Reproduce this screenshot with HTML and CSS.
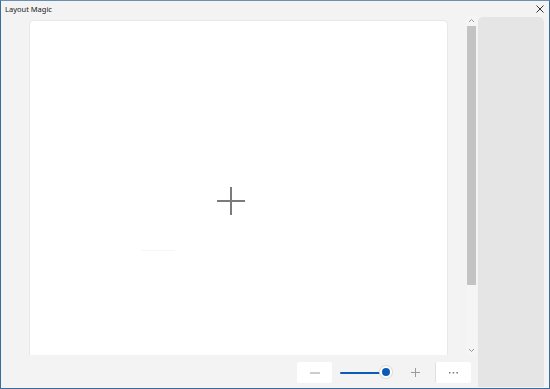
FILE: index.html
```html
<!DOCTYPE html>
<html>
  <head>
    <title>Layout Magic</title>
    <link rel="stylesheet" href="styles.css">
  </head>
  <body>
    <div class="window">
      <div class="titlebar">
        <span class="title">Layout Magic</span>
        <svg class="close" width="8" height="8" viewBox="0 0 8 8">
          <path d="M0.5 0.5 L7.5 7.5 M7.5 0.5 L0.5 7.5" stroke="#333" stroke-width="1" fill="none"/>
        </svg>
      </div>
      <div class="main">
        <div class="workspace">
          <div class="canvas-row">
            <div class="canvas">
              <svg class="add" width="30" height="30" viewBox="0 0 30 30">
                <path d="M15 1 V29 M1 15 H29" stroke="#7b7b7b" stroke-width="2" fill="none"/>
              </svg>
              <div class="ghost-line"></div>
            </div>
            <div class="scrollbar">
              <svg class="arrow" width="7" height="5" viewBox="0 0 7 5">
                <path d="M1 4 L3.5 1.5 L6 4" stroke="#9a9a9a" stroke-width="1" fill="none"/>
              </svg>
              <div class="thumb"></div>
              <svg class="arrow" width="7" height="5" viewBox="0 0 7 5">
                <path d="M1 1 L3.5 3.5 L6 1" stroke="#9a9a9a" stroke-width="1" fill="none"/>
              </svg>
            </div>
          </div>
          <div class="toolbar">
            <div class="btn">
              <svg width="10" height="2" viewBox="0 0 10 2"><path d="M0 1 H10" stroke="#9a9a9a" stroke-width="1"/></svg>
            </div>
            <div class="slider">
              <div class="track"></div>
              <div class="knob"></div>
            </div>
            <div class="btn flat">
              <svg width="9" height="9" viewBox="0 0 9 9"><path d="M4.5 0 V9 M0 4.5 H9" stroke="#9a9a9a" stroke-width="1"/></svg>
            </div>
            <div class="sep"></div>
            <div class="btn">
              <svg width="9" height="2" viewBox="0 0 9 2">
                <rect x="0" y="0" width="1.5" height="1.5" fill="#777"/>
                <rect x="3.7" y="0" width="1.5" height="1.5" fill="#777"/>
                <rect x="7.4" y="0" width="1.5" height="1.5" fill="#777"/>
              </svg>
            </div>
          </div>
        </div>
        <div class="panel"></div>
      </div>
    </div>
  </body>
</html>
```

FILE: styles.css
```css
html, body {
  margin: 0;
  height: 100%;
}

body {
  font-family: "Noto Sans", "Liberation Sans", sans-serif;
  background-color: #f3f3f3;
}

.window {
  box-sizing: border-box;
  width: 550px;
  height: 389px;
  border: 1px solid #3b6d9c;
  border-top-color: #6a8fb3;
  background-color: #f3f3f3;
  display: flex;
  flex-direction: column;
}

.titlebar {
  height: 15px;
  display: flex;
  align-items: center;
  justify-content: space-between;
  padding: 0 5px 0 4px;
}

.title {
  font-size: 7.5px;
  color: #1a1a1a;
  margin-top: 1px;
}

.close {
  margin-top: 1px;
}

.main {
  flex: 1;
  display: flex;
}

.workspace {
  flex: 1;
  display: flex;
  flex-direction: column;
  padding-top: 4px;
}

.canvas-row {
  display: flex;
  height: 335px;
}

.canvas {
  box-sizing: border-box;
  width: 419px;
  margin-left: 28px;
  background-color: #ffffff;
  border: 1px solid #e8e8e8;
  border-bottom: none;
  border-radius: 5px 5px 0 0;
  padding: 165px 0 0 186px;
  display: flex;
  flex-direction: column;
  align-items: flex-start;
}

.ghost-line {
  width: 34px;
  height: 1px;
  margin: 34px 0 0 -75px;
  background-color: #f6f6f6;
}

.scrollbar {
  width: 11px;
  margin-left: 18px;
  margin-top: -4px;
  display: flex;
  flex-direction: column;
  align-items: center;
  background-color: #f5f5f5;
}

.arrow {
  margin: 2px 0 2px;
}

.thumb {
  width: 9px;
  height: 259px;
  margin-top: 1px;
  background-color: #c3c3c3;
}

.scrollbar .arrow:last-child {
  margin-top: auto;
  margin-bottom: 2px;
}

.toolbar {
  display: flex;
  align-items: center;
  justify-content: flex-end;
  padding-right: 7px;
  margin-top: 7px;
}

.btn {
  width: 35px;
  height: 21px;
  background-color: #ffffff;
  border-radius: 2px;
  display: flex;
  align-items: center;
  justify-content: center;
}

.btn.flat {
  width: 40px;
  background-color: transparent;
}

.slider {
  position: relative;
  width: 55px;
  height: 21px;
  margin-left: 8px;
  display: flex;
  align-items: center;
}

.track {
  width: 46px;
  height: 2px;
  border-radius: 1px;
  background-color: #0a5bb5;
}

.knob {
  position: absolute;
  left: 40px;
  top: 4px;
  box-sizing: border-box;
  width: 12px;
  height: 12px;
  border-radius: 50%;
  background-color: #0a5bb5;
  border: 2px solid #ffffff;
  box-shadow: 0 0 0 1px #dcdcdc;
}

.sep {
  width: 1px;
  height: 19px;
  background-color: #e0e0e0;
}

.panel {
  width: 66px;
  margin: 1px 5px 1px 0;
  background-color: #e5e5e5;
  border-radius: 5px 5px 0 0;
}
```
